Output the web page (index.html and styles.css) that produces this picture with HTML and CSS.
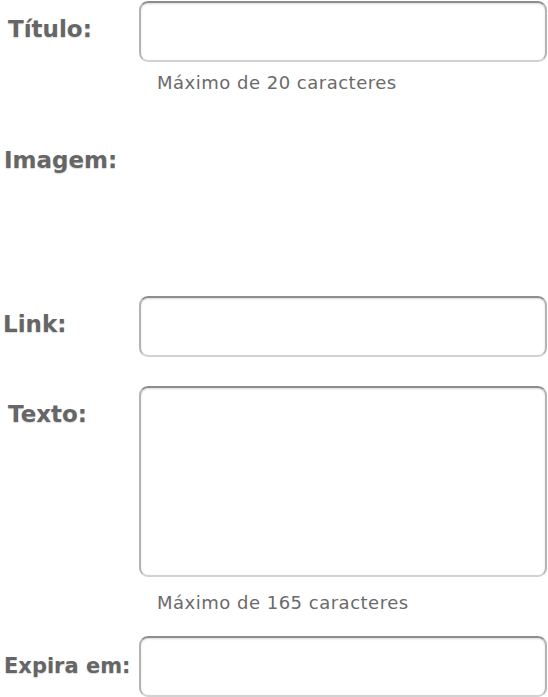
FILE: index.html
```html
<!DOCTYPE html>
<html lang="pt">
<head>
  <meta charset="UTF-8">
  <meta name="viewport" content="width=device-width, initial-scale=1.0">
  <title>Novo anúncio</title>
  <link rel="stylesheet" href="styles.css">
</head>
<body>
  <form class="ad-form">
    <div class="row">
      <label class="label label-titulo" for="titulo">Título:</label>
      <div class="field">
        <input class="input" type="text" id="titulo" maxlength="20">
        <p class="help">Máximo de 20 caracteres</p>
      </div>
    </div>

    <div class="row row-image">
      <label class="label label-imagem">Imagem:</label>
      <div class="field image-slot"></div>
    </div>

    <div class="row row-link">
      <label class="label label-link" for="link">Link:</label>
      <div class="field">
        <input class="input" type="text" id="link">
      </div>
    </div>

    <div class="row row-texto">
      <label class="label label-texto" for="texto">Texto:</label>
      <div class="field">
        <textarea class="input textarea" id="texto" maxlength="165"></textarea>
        <p class="help help-texto">Máximo de 165 caracteres</p>
      </div>
    </div>

    <div class="row row-expira">
      <label class="label label-expira" for="expira">Expira em:</label>
      <div class="field">
        <input class="input" type="text" id="expira">
      </div>
    </div>
  </form>
</body>
</html>
```

FILE: styles.css
```css
body {
  margin: 0;
  padding: 0;
  background-color: #fff;
  font-family: "DejaVu Sans", Verdana, sans-serif;
}

.ad-form {
  width: 548px;
  padding-top: 1px;
}

.row {
  display: grid;
  grid-template-columns: 139px 1fr;
}

.label {
  padding-top: 14px;
  font-size: 23px;
  line-height: 28px;
  font-weight: bold;
  color: #666;
  text-shadow: 0 1px 1px rgba(0, 0, 0, 0.15);
}

.label-titulo { padding-left: 8px; }
.label-imagem { padding-left: 4px; }
.label-link { padding-left: 3px; }
.label-texto { padding-left: 8px; }
.label-expira {
  padding-left: 4px;
  padding-top: 16px;
  font-size: 21px;
}

.field {
  display: flex;
  flex-direction: column;
}

.input {
  display: block;
  box-sizing: border-box;
  width: 408px;
  height: 61px;
  margin: 0;
  padding: 6px 10px;
  font-family: inherit;
  font-size: 18px;
  background-color: #fff;
  border: 2px solid #b4b4b4;
  border-top-color: #8e8e8e;
  border-bottom-color: #d2d2d2;
  border-radius: 9px;
  box-shadow: inset 0 1px 2px rgba(0, 0, 0, 0.15);
  outline: none;
}

.textarea {
  height: 191px;
  resize: none;
}

.help {
  margin: 10px 0 0 18px;
  font-size: 18px;
  line-height: 22px;
  letter-spacing: 0.5px;
  color: #6a6a6a;
}

.help-texto {
  margin-top: 15px;
}

.row-image {
  margin-top: 52px;
}

.label-imagem {
  padding-top: 0;
}

.image-slot {
  height: 150px;
}

.row-texto {
  margin-top: 29px;
}

.row-expira {
  margin-top: 22px;
}
```
